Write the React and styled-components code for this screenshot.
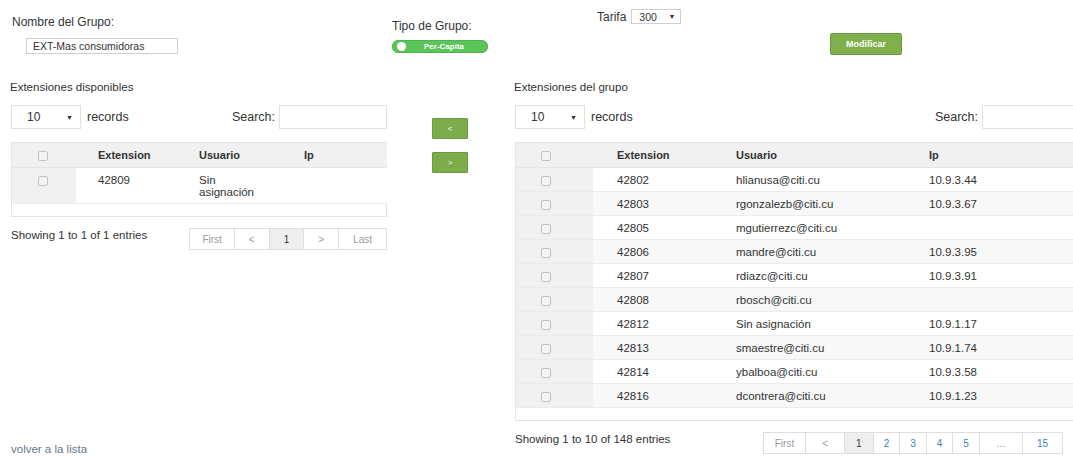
import React from 'react'
import styled, { createGlobalStyle } from 'styled-components'

const GlobalStyle = createGlobalStyle`
    html, body {
        margin     : 0;
        padding    : 0;
        background : #fff;
    }
    body {
        width       : 1073px;
        height      : 457px;
        overflow    : hidden;
        font-family : "Liberation Sans", Arial, sans-serif;
        color       : #333;
    }
`

const available = [
    { ext: '42809', user: 'Sin asignación', ip: '' },
]

const group = [
    { ext: '42802', user: 'hlianusa@citi.cu', ip: '10.9.3.44' },
    { ext: '42803', user: 'rgonzalezb@citi.cu', ip: '10.9.3.67' },
    { ext: '42805', user: 'mgutierrezc@citi.cu', ip: '' },
    { ext: '42806', user: 'mandre@citi.cu', ip: '10.9.3.95' },
    { ext: '42807', user: 'rdiazc@citi.cu', ip: '10.9.3.91' },
    { ext: '42808', user: 'rbosch@citi.cu', ip: '' },
    { ext: '42812', user: 'Sin asignación', ip: '10.9.1.17' },
    { ext: '42813', user: 'smaestre@citi.cu', ip: '10.9.1.74' },
    { ext: '42814', user: 'ybalboa@citi.cu', ip: '10.9.3.58' },
    { ext: '42816', user: 'dcontrera@citi.cu', ip: '10.9.1.23' },
]

// column layouts: [check, extension, usuario, ip]
const leftCols = { widths: [64, 101, 105, null], check: 26, pad: 22 }
const rightCols = { widths: [77, 119, 193, null], check: 25, pad: 24 }

const Check = () => <Box />

const DataTable = ({ rows, cols, userWidth }) => (
    <TableBox>
        <Table>
            <colgroup>
                {cols.widths.map((w, i) => <col key={i} style={w ? { width: w } : undefined} />)}
            </colgroup>
            <thead>
                <tr>
                    <Th $pad={cols.check}><Check /></Th>
                    <Th $pad={cols.pad}>Extension</Th>
                    <Th $pad={cols.pad}>Usuario</Th>
                    <Th $pad={cols.pad}>Ip</Th>
                </tr>
            </thead>
            <tbody>
                {rows.map((r, i) => (
                    <Row key={r.ext} $odd={i % 2 === 1}>
                        <Td $pad={cols.check} $sorted><Check /></Td>
                        <Td $pad={cols.pad}>{r.ext}</Td>
                        <Td $pad={cols.pad}><UserText $max={userWidth}>{r.user}</UserText></Td>
                        <Td $pad={cols.pad}>{r.ip}</Td>
                    </Row>
                ))}
            </tbody>
        </Table>
    </TableBox>
)

const Toolbar = () => (
    <Tools>
        <LengthSelect>
            <span>10</span>
            <Caret>▼</Caret>
        </LengthSelect>
        <Records>records</Records>
        <SearchLabel>Search:</SearchLabel>
        <SearchInput />
    </Tools>
)

const Pager = ({ items, inset }) => (
    <Pagination $inset={inset}>
        {items.map(it => (
            <PageItem key={it.label} $pad={it.pad} $active={it.active} $link={it.link}>
                {it.label}
            </PageItem>
        ))}
    </Pagination>
)

const leftPages = [
    { label: 'First', pad: 12 },
    { label: '<', pad: 14 },
    { label: '1', pad: 14, active: true },
    { label: '>', pad: 14 },
    { label: 'Last', pad: 14 },
]

const rightPages = [
    { label: 'First', pad: 11 },
    { label: '<', pad: 16 },
    { label: '1', pad: 11, active: true },
    { label: '2', pad: 10, link: true },
    { label: '3', pad: 10, link: true },
    { label: '4', pad: 10, link: true },
    { label: '5', pad: 10, link: true },
    { label: '…', pad: 16 },
    { label: '15', pad: 14, link: true },
]

const App = () => (
    <Page>
        <GlobalStyle />
        <Header>
            <NameField>
                <Label>Nombre del Grupo:</Label>
                <NameInput readOnly value='EXT-Mas consumidoras' />
            </NameField>
            <TypeField>
                <Label>Tipo de Grupo:</Label>
                <Toggle>
                    <Knob />
                    <ToggleText>Per-Capita</ToggleText>
                </Toggle>
            </TypeField>
            <TariffField>
                <TariffRow>
                    <Label>Tarifa</Label>
                    <TariffSelect>
                        <span>300</span>
                        <Caret>▼</Caret>
                    </TariffSelect>
                </TariffRow>
                <SaveButton>Modificar</SaveButton>
            </TariffField>
        </Header>

        <Content>
            <LeftColumn>
                <PanelTitle>Extensiones disponibles</PanelTitle>
                <Toolbar />
                <DataTable rows={available} cols={leftCols} userWidth={62} />
                <Footer>
                    <Info>Showing 1 to 1 of 1 entries</Info>
                    <Pager items={leftPages} />
                </Footer>
                <BackLink href='#'>volver a la lista</BackLink>
            </LeftColumn>

            <MoveColumn>
                <MoveButton>&lt;</MoveButton>
                <MoveButton>&gt;</MoveButton>
            </MoveColumn>

            <RightColumn>
                <PanelTitle>Extensiones del grupo</PanelTitle>
                <Toolbar />
                <DataTable rows={group} cols={rightCols} />
                <Footer>
                    <Info>Showing 1 to 10 of 148 entries</Info>
                    <Pager items={rightPages} inset={27} />
                </Footer>
            </RightColumn>
        </Content>
    </Page>
)

export default App

const Page = styled.div`
    display        : flex;
    flex-direction : column;
    width          : 1073px;
    height         : 457px;
`

const Header = styled.div`
    display : flex;
    height  : 80px;
`

const Label = styled.div`
    font-size   : 12px;
    line-height : 14px;
    color       : #333;
`

const NameField = styled.div`
    width       : 392px;
    flex-shrink : 0;
    padding     : 15px 0 0 12px;
    box-sizing  : border-box;
`

const NameInput = styled.input`
    display     : block;
    margin      : 9px 0 0 14px;
    width       : 152px;
    height      : 16px;
    box-sizing  : border-box;
    border      : 1px solid #cfcfcf;
    padding     : 0 6px;
    font-family : inherit;
    font-size   : 10.5px;
    color       : #333;
    outline     : none;
`

const TypeField = styled.div`
    width       : 205px;
    flex-shrink : 0;
    padding-top : 19px;
`

const Toggle = styled.div`
    display       : flex;
    align-items   : center;
    margin-top    : 7px;
    width         : 96px;
    height        : 13px;
    border-radius : 7px;
    background    : #5cc55a;
    box-shadow    : inset 0 0 0 1px #4fb44d;
`

const Knob = styled.span`
    width         : 9px;
    height        : 9px;
    margin-left   : 5px;
    border-radius : 50%;
    background    : #fff;
`

const ToggleText = styled.span`
    flex          : 1;
    text-align    : center;
    color         : #fff;
    font-size     : 8px;
    font-weight   : bold;
    padding-right : 6px;
`

const TariffField = styled.div`
    padding-top : 9px;
`

const TariffRow = styled.div`
    display     : flex;
    align-items : center;
    gap         : 5px;
`

const TariffSelect = styled.div`
    display         : flex;
    align-items     : center;
    justify-content : space-between;
    width           : 50px;
    height          : 15px;
    box-sizing      : border-box;
    padding         : 0 5px 0 7px;
    border          : 1px solid #cfcfcf;
    font-size       : 10.5px;
`

const Caret = styled.span`
    font-size : 7px;
    color     : #333;
`

const SaveButton = styled.button`
    display       : block;
    margin        : 9px 0 0 233px;
    width         : 72px;
    height        : 22px;
    border        : 1px solid #6e9a3f;
    border-radius : 2px;
    background    : #80b04b;
    color         : #fff;
    font-family   : inherit;
    font-size     : 9px;
    font-weight   : bold;
    padding       : 0;
`

const Content = styled.div`
    display : flex;
    flex    : 1;
`

const LeftColumn = styled.div`
    display        : flex;
    flex-direction : column;
    width          : 376px;
    flex-shrink    : 0;
    margin-left    : 11px;
`

const RightColumn = styled.div`
    display        : flex;
    flex-direction : column;
    width          : 575px;
    flex-shrink    : 0;
`

const MoveColumn = styled.div`
    display        : flex;
    flex-direction : column;
    gap            : 13px;
    width          : 83px;
    flex-shrink    : 0;
    padding        : 38px 0 0 45px;
`

const MoveButton = styled.button`
    width         : 36px;
    height        : 21px;
    padding       : 0;
    border        : 1px solid #6e9a3f;
    border-radius : 1px;
    background    : #7dac4b;
    color         : #fff;
    font-family   : inherit;
    font-size     : 8px;
`

const PanelTitle = styled.div`
    font-size   : 11.5px;
    line-height : 14px;
    margin-left : -1px;
`

const Tools = styled.div`
    display     : flex;
    align-items : center;
    height      : 24px;
    margin-top  : 11px;
`

const LengthSelect = styled.div`
    display         : flex;
    align-items     : center;
    justify-content : space-between;
    width           : 70px;
    height          : 24px;
    box-sizing      : border-box;
    padding         : 0 7px 0 15px;
    border          : 1px solid #e2e2e2;
    font-size       : 12px;
`

const Records = styled.span`
    margin-left : 6px;
    font-size   : 12.5px;
`

const SearchLabel = styled.span`
    margin-left : auto;
    font-size   : 12.5px;
`

const SearchInput = styled.div`
    width       : 108px;
    height      : 24px;
    box-sizing  : border-box;
    margin-left : 4px;
    border      : 1px solid #e2e2e2;
`

const TableBox = styled.div`
    margin-top     : 13px;
    border         : 1px solid #e4e4e4;
    border-right   : none;
    padding-bottom : 12px;
    box-shadow     : inset -1px 0 0 #e4e4e4;
`

const Table = styled.table`
    width           : 100%;
    border-collapse : collapse;
    table-layout    : fixed;
`

const Th = styled.th`
    height        : 24px;
    padding       : 0 0 0 ${p => p.$pad}px;
    text-align    : left;
    background    : #f1f1f1;
    font-size     : 11px;
    font-weight   : bold;
    color         : #333;
    border-bottom : 1px solid #e4e4e4;
`

const Row = styled.tr`
    background : ${p => (p.$odd ? '#f8f8f8' : '#fff')};
`

const Td = styled.td`
    padding        : 6px 0 5px ${p => p.$pad}px;
    vertical-align : top;
    font-size      : 11.5px;
    line-height    : 12px;
    color          : #333;
    border-bottom  : 1px solid #ececec;
    background     : ${p => (p.$sorted ? '#f1f1f1' : 'transparent')};
`

const UserText = styled.span`
    display   : inline-block;
    max-width : ${p => (p.$max ? `${p.$max}px` : 'none')};
`

const Box = styled.span`
    display        : inline-block;
    width          : 8px;
    height         : 8px;
    margin-top     : 2px;
    border         : 1px solid #c3c3c3;
    border-radius  : 2px;
    background     : #f4f4f4;
    vertical-align : top;
`

const Footer = styled.div`
    display         : flex;
    justify-content : space-between;
    align-items     : flex-start;
    margin-top      : 11px;
`

const Info = styled.div`
    font-size   : 11.5px;
    line-height : 14px;
`

const Pagination = styled.div`
    display      : flex;
    margin-right : ${p => p.$inset || 0}px;
`

const PageItem = styled.span`
    height      : 22px;
    box-sizing  : border-box;
    display     : flex;
    align-items : center;
    padding     : 0 ${p => p.$pad}px;
    margin-left : -1px;
    border      : 1px solid #dedede;
    font-size   : 10px;
    color       : ${p => (p.$active ? '#333' : p.$link ? '#3a7fc1' : '#9a9a9a')};
    background  : ${p => (p.$active ? '#eeeeee' : '#fff')};

    &:first-child {
        margin-left : 0;
    }
`

const BackLink = styled.a`
    margin-top      : auto;
    margin-bottom   : 1px;
    font-size       : 11.5px;
    line-height     : 14px;
    color           : #667687;
    text-decoration : none;
`
